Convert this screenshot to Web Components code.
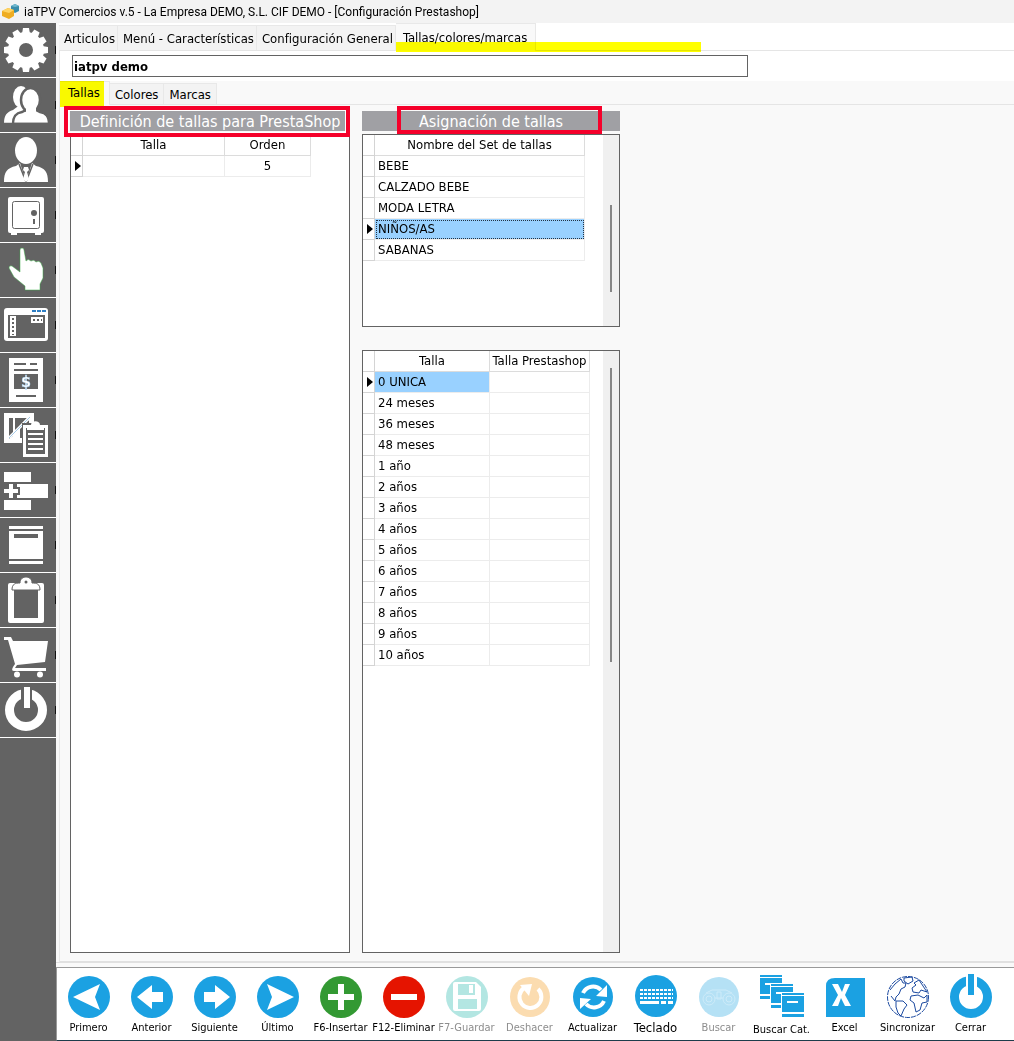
<!DOCTYPE html>
<html lang="es">
<head>
<meta charset="utf-8">
<title>iaTPV Comercios v.5</title>
<style>
html, body { margin: 0; background: #f9f9f9; }
body { font-family: "DejaVu Sans Condensed", "DejaVu Sans", sans-serif; font-size: 13px; color: #000; }
</style>
</head>
<body>
<pos-app></pos-app>
<script>
const define = (name, html, setup) => {
  const t = document.createElement('template');
  t.innerHTML = html;
  customElements.define(name, class extends HTMLElement {
    constructor() {
      super();
      this.attachShadow({ mode: 'open' }).append(t.content.cloneNode(true));
    }
    connectedCallback() { if (setup && !this.ready) { this.ready = true; setup(this, this.shadowRoot); } }
  });
};

const D = '#636363';
const tooth = a => `<path transform="rotate(${a} 26 27)" d="M22 11l1-6h6l1 6z"/>`;
const sideIcons = {
  config: `<circle cx="26" cy="27" r="12.500" stroke-width="11" stroke="#fff" fill="none"/>${Array.from({ length: 12 }, (_, i) => tooth(i * 30)).join('')}`,
  clientes: `<ellipse cx="21" cy="19" rx="8" ry="11"/><path d="M4 45c0-8 3-11 9-13l4-3h7v16z"/><g stroke="${D}" stroke-width="2.500"><path d="M13 46c0-8 3-11 9-12l4-2h10l4 2c6 1 9 4 9 12z"/><ellipse cx="30.500" cy="22" rx="9.500" ry="12"/></g><path d="M26 30h10v6H26z"/><path d="M3 44.800h46v3H3z" fill="${D}"/>`,
  usuario: `<ellipse cx="26" cy="17.500" rx="11" ry="13.500"/><path d="M4 49c0-10 3-14 12-16l4-3 6 19 6-19 4 3c9 2 12 6 12 16z"/><path d="M19 31l7 18 7-18" fill="none" stroke="${D}" stroke-width="1.500"/><path d="M24 34h4l1 3-2 2 2 7-3 3-3-3 2-7-2-2z"/>`,
  caja: `<rect x="8" y="9" width="36" height="36" rx="2"/><path d="M11 44h6v3h-6zM35 44h6v3h-6z"/><rect x="12.500" y="13.500" width="27" height="27" rx="2" fill="none" stroke="${D}"/><circle cx="34" cy="25" r="3" fill="${D}"/><path d="M33 31h2v5h-2z" fill="${D}"/>`,
  tpv: `<path stroke="#3fae49" stroke-width=".5" d="M20 7q0-2 2-2t2 2l2 11q2-3 5 0 3-2 5 1 3-2 5 1l2 5v10l-3 6v6H25v-4L14 34 9 25q0-3 3-2l8 6z"/>`,
  ventana: `<rect x="4" y="10" width="44" height="33" rx="3"/><path d="M8 17h37v23H8z" fill="${D}"/><path d="M10 18h6v20h-6zM31 19h12v6H31z"/><path d="M32 13h14" stroke="#2f7fc4" stroke-width="2" stroke-dasharray="4 1"/><path d="M13 20v17M33 22h9" stroke="${D}" stroke-width="2" stroke-dasharray="2"/>`,
  factura: `<path d="M9 5h34v44H9z"/><path d="M14 11h12M30 11h7M14 17h24M16 43h20" stroke="${D}" stroke-width="2"/><path d="M14 21h24v15H14z" fill="${D}"/><text x="26" y="34" text-anchor="middle" font-size="16" font-weight="bold" stroke="#9fd0f5" stroke-width=".4">$</text>`,
  informe: `<path d="M4 5h30v30H4z"/><path d="M9 10h4v18l-4 3zM15 10h12L15 23z" fill="${D}"/><path d="M20 30V20l9-8v18z" fill="${D}"/><path d="M9 30L30 9" stroke="#fff" stroke-width="3"/><path d="M9 30L30 9" stroke="#7fb4e0" stroke-width=".7"/><path d="M22 15h27v35H22z" fill="${D}"/><path d="M23 17h25v32H23z"/><path d="M26 20h19v26H26z" fill="${D}"/><path d="M27 22v-5h4c0-5 9-5 9 0h4v5z"/><path d="M28 26h15M28 31h15M28 36h15M28 41h15" stroke="#fff" stroke-width="2"/>`,
  anadir: `<path d="M4 9h27v10H4zM4 37h27v10H4zM17 21h31v14H17v-3h3v-8h-3z"/><path d="M4 28h14M11 21v14" stroke="#fff" stroke-width="4"/>`,
  archivo: `<path d="M9 8h34v3H9zM9 13h34v28H9zM9 43h34v3H9z"/><path d="M14 16h24v4H14z" fill="${D}"/>`,
  tareas: `<rect x="8" y="10" width="36" height="40" rx="2"/><path d="M14 16h24v29H14z" fill="${D}"/><path d="M12 17c0-6 3-7 8-7 0-8 12-8 12 0 5 0 8 1 8 7z" stroke="${D}"/><circle cx="26" cy="9" r="1.500" fill="${D}"/>`,
  compras: `<path d="M4 9h7l2 4 35 0-3 21-28 3-2 3h31v3H14c-3 0-2-3 1-7L8 12H4z"/><circle cx="17" cy="46.500" r="3"/><circle cx="40" cy="46.500" r="3"/>`,
  salir: `<circle cx="26" cy="27" r="16.500" fill="none" stroke="#fff" stroke-width="9"/><path d="M21 3h11v18H21z" fill="${D}"/><path d="M24 4h6v21h-6z"/>`
};

const B = '#1ba1e2';
const disc = (c, inner, r = 21) => `<circle cx="22" cy="23" r="${r}" fill="${c}"/>${inner}`;
const sheet = (x, y) => `<path fill="#fff" d="M${x - 1} ${y - 1}h24v26h-24z"/><path d="M${x} ${y}h22v2h-22zM${x} ${y + 3}h22v16h-22zM${x} ${y + 21}h22v3h-22z" fill="${B}"/><path d="M${x + 5} ${y + 8}h11v2h-11z" fill="#fff"/>`;
const toolIcons = {
  primero: disc(B, `<path d="M6 23l27-13-5 13 5 13z"/>`),
  anterior: disc(B, `<path d="M7 23l15-12v7h11v10H22v7z"/>`),
  siguiente: disc(B, `<path d="M37 23L22 11v7H11v10h11v7z"/>`),
  ultimo: disc(B, `<path d="M38 23L11 10l5 13-5 13z"/>`),
  insertar: disc('#339933', `<path d="M19 10h6v10h10v6H25v10h-6V26H9v-6h10z"/>`),
  eliminar: disc('#e51400', `<path d="M9 20h26v6H9z"/>`),
  guardar: disc('#b3e6e2', `<path d="M8 10q0-2 2-2h21l5 5v22q0 2-2 2H10q-2 0-2-2z"/><path d="M13 10h17v11H13zM13 25h19v10H13z" fill="#b3e6e2"/><path d="M24 11h4v8h-4z"/>`),
  deshacer: disc('#fbdcb0', `<path d="M30 15a11 11 0 1 1-14-1" fill="none" stroke="#fff" stroke-width="4"/><path d="M12 11l12-1-3 12z"/>`, 20),
  actualizar: disc(B, `<g fill="none" stroke="#fff" stroke-width="4"><path d="M12 19a11 11 0 0 1 18-3"/><path d="M33 27a11 11 0 0 1-18 3"/></g><path d="M36 11v12l-11-1zM9 35V24l11 1z"/>`, 20),
  teclado: `<circle cx="22" cy="22" r="21" fill="${B}"/><path d="M6 16h33M6 20h33M6 24h33" stroke="#fff" stroke-width="2" stroke-dasharray="3 1"/><path d="M6 27h19v3H6zM27 27h5v3h-5zM34 27h5v3h-5z"/>`,
  buscar: disc('#b5e1f5', `<g fill="none" stroke="#cdebf9"><circle cx="12" cy="25" r="6"/><circle cx="32" cy="25" r="6"/><circle cx="12" cy="25" r="3"/><circle cx="32" cy="25" r="3"/><path d="M9 19l6-3h14l6 3M18 24h8M20 18h4v7h-4z"/></g>`, 20),
  categorias: sheet(0, 1) + sheet(11, 10) + sheet(22, 19),
  excel: `<path d="M3 12q0-8 9-8h30v39H3z" fill="${B}"/><path d="M9 10h6l4 8 3-8h5l-5 11 6 11h-6l-4-8-3 8H9l6-11z"/>`,
  sincronizar: `<g fill="none" stroke="#1c4aa0"><circle cx="22" cy="23" r="20.500" stroke-dasharray="5 1"/><path d="M4 16l5-6 6-5 2 4 3 0-1 4-4 2-2 5-3 3-1 4-4-5M18 4l8-1 1 4-5 3-4-3zM28 9l5-3 4 6 4 6-6-2-2 3-6-1-1-4 4-3zM25 22l7-1 6 3 3-3 0 7-5 1-2 7-4 2-2-9-4-3zM10 27l7 0 4 4-3 4-3 7-3-3-2-6z"/></g>`,
  cerrar: `<circle cx="22" cy="23" r="16.500" fill="none" stroke="${B}" stroke-width="9"/><path d="M17 0h11v18H17z"/><path d="M19 0h6v21h-6z" fill="${B}"/>`
};

define('title-bar', `
<style>
:host { display: flex; align-items: center; gap: 5px; height: 23px; padding-left: 2px; background: #f3f3f3; font: 12px Roboto, sans-serif; white-space: nowrap; }
svg { flex: none; }
</style>
<svg width="17" height="17" viewBox="0 0 17 17"><path d="M9 3l4-2 4 2v5l-4 2-4-2z" fill="#3b8daa"/><path d="M9 3l4 1 4-1-4-2z" fill="#72b9cf"/><path d="M0 8l6-3 6 2v6l-5 3-7-3z" fill="#efad22"/><path d="M0 8l6-3 6 2-5 3z" fill="#ffd465"/></svg>
<span><slot></slot></span>`);

define('side-button', `
<style>
:host { display: block; border-bottom: 1px solid #fff; }
button { display: block; position: relative; width: 100%; height: 54px; padding: 0; border: 0; background: ${D}; font: inherit; }
button::after { content: ""; position: absolute; right: 0; top: 23px; width: 1px; height: 8px; background: #111; }
svg { display: block; fill: #fff; }
</style>
<button type="button"><svg width="56" height="54" viewBox="0 0 56 54"></svg></button>`,
(el, root) => {
  root.querySelector('svg').innerHTML = sideIcons[el.getAttribute('icon')];
  root.querySelector('button').setAttribute('aria-label', el.getAttribute('icon'));
});

define('side-nav', `
<style>:host { display: block; background: ${D}; }</style>
<nav>${Object.keys(sideIcons).map(k => `<side-button icon="${k}"></side-button>`).join('')}</nav>`);

define('tab-item', `
<style>
:host { display: block; position: relative; height: 25px; }
:host([active]) { height: 28px; margin-bottom: -1px; }
:host([sub]) { height: 21px; }
:host([sub][active]) { height: 24px; }
button { box-sizing: border-box; height: 100%; padding: 0 2px 0 5px; border: 1px solid #e8e8e8; border-width: 1px 1px 0 0; background: #f3f3f3; font: inherit; color: inherit; white-space: nowrap; }
:host([active]) button { background: #f9f9f9; padding: 0 8px 1px 7px; }
:host([sub]) button { padding: 0 5px; }
:host([sub][active]) button { padding: 0 9px 2px 8px; }
</style>
<button type="button" role="tab"><slot></slot></button><slot name="mark"></slot>`);

define('tab-strip', `
<style>
:host { display: flex; align-items: flex-end; border-bottom: 1px solid #e5e5e5; }
</style>
<slot></slot>`);

define('section-heading', `
<style>
:host { display: block; position: relative; }
h2 { margin: 0; height: 20px; line-height: 21px; background: #a0a0a4; color: #fff; font-size: 16px; font-weight: normal; text-align: center; white-space: nowrap; }
</style>
<h2><slot></slot></h2><slot name="mark"></slot>`);

define('data-grid', `
<style>
:host { display: flex; box-sizing: border-box; border: 1px solid #636363; background: #fff; }
.body { flex: 1; min-width: 0; }
table { border-collapse: separate; border-spacing: 0; table-layout: fixed; }
th, td { box-sizing: border-box; height: 21px; padding: 0 0 0 3px; border: solid #ececec; border-width: 0 1px 1px 0; font-weight: normal; text-align: left; line-height: 20px; white-space: nowrap; }
th { padding: 0; text-align: center; border-color: #dcdcdc; }
tr > :first-child { padding: 0; border-color: #d4d4d4; }
td.center { text-align: center; padding: 0; }
td.sel { background: #99d1ff; }
td.focus { outline: 1px dotted #234; outline-offset: -2px; }
.ptr { display: block; width: 0; margin-left: 4px; border: solid transparent; border-width: 5px 0 5px 6px; border-left-color: #000; }
.bar { display: none; flex: none; width: 16px; background: #f0f0f0; }
:host([scroll]) .bar { display: block; }
.thumb { width: 2px; height: var(--thumb-size); margin: var(--thumb-start) 0 0 7px; background: #868686; }
</style>
<div class="body"><table></table></div><div class="bar"><div class="thumb"></div></div>`,
(el, root) => {
  const cols = JSON.parse(el.getAttribute('columns'));
  const rows = JSON.parse(el.getAttribute('rows'));
  const cur = Number(el.getAttribute('current'));
  const mode = el.getAttribute('select') || '';
  const table = root.querySelector('table');
  table.style.width = 12 + cols.reduce((s, c) => s + c[1], 0) + 'px';
  table.innerHTML = `<colgroup><col style="width:12px">${cols.map(c => `<col style="width:${c[1]}px">`).join('')}</colgroup>
  <thead><tr><th></th>${cols.map(c => `<th scope="col">${c[0]}</th>`).join('')}</tr></thead>
  <tbody>${rows.map((r, i) => `<tr><td>${i === cur ? '<span class="ptr"></span>' : ''}</td>${cols.map((c, j) =>
    `<td class="${c[2] || ''} ${i === cur && j === 0 ? mode : ''}">${r[j] || ''}</td>`).join('')}</tr>`).join('')}</tbody>`;
});

define('tool-button', `
<style>
:host { display: block; flex: 0 1 63px; min-width: 0; }
button { display: flex; flex-direction: column; align-items: center; gap: 2px; width: 100%; padding: 0; border: 0; background: none; font: inherit; font-size: 11px; line-height: 16px; color: #000; white-space: nowrap; }
:host([large]) button { font-size: 13px; }
:host([low]) button { gap: 4px; }
button:disabled { color: #8d8d8d; }
svg { display: block; fill: #fff; flex: none; }
</style>
<button type="button"><svg width="44" height="44" viewBox="0 0 44 44"></svg><span><slot></slot></span></button>`,
(el, root) => {
  root.querySelector('svg').innerHTML = toolIcons[el.getAttribute('icon')];
  root.querySelector('button').disabled = el.hasAttribute('disabled');
});

define('tool-bar', `
<style>
:host { display: flex; box-sizing: border-box; height: 74px; padding-top: 6px; border: solid #999; border-width: 1px 0 0 1px; border-bottom: 1px solid #1d3c4b; background: #fff; }
</style>
<slot></slot>`);

define('marker-box', `
<style>
:host { display: block; position: absolute; box-sizing: border-box; border: 4px solid #f5002a; pointer-events: none; }
:host([pale]) { box-shadow: inset 0 0 0 1px #fff; }
</style>`);

define('marker-pen', `
<style>:host { display: block; position: absolute; background: #ff0; mix-blend-mode: multiply; pointer-events: none; }</style>`);

define('sizes-page', `
<style>
:host { display: flex; flex-direction: column; background: #f9f9f9; }
.shop { padding: 4px 12px; background: #fff; }
input { display: block; box-sizing: border-box; width: 676px; max-width: 100%; height: 22px; padding: 0 1px; border: 1px solid #636363; background: #fff; font: inherit; font-weight: bold; color: #000; }
.panels { flex: 1; display: flex; gap: 12px; padding: 6px 10px 8px; border-bottom: 1px solid #e0e0e0; }
.left, .right { display: flex; flex-direction: column; gap: 3px; }
.left { width: 280px; }
.right { width: 258px; }
.grow { flex: 1; }
.sets { height: 193px; margin-bottom: 20px; }
.pen { left: 0; right: 6px; top: 0; bottom: -2px; }
.boxed { inset: -5px 0 -6px -6px; }
.boxed2 { inset: -5px 18px -3px 35px; }
</style>
<div class="shop"><input aria-label="Tienda" value="iatpv demo"></div>
<tab-strip role="tablist">
  <tab-item sub active>Tallas<marker-pen slot="mark" class="pen"></marker-pen></tab-item>
  <tab-item sub>Colores</tab-item>
  <tab-item sub>Marcas</tab-item>
</tab-strip>
<div class="panels">
  <section class="left">
    <section-heading>Definición de tallas para PrestaShop<marker-box slot="mark" class="boxed" pale></marker-box></section-heading>
    <data-grid class="grow" columns='[["Talla",142],["Orden",86,"center"]]' rows='[["","5"]]' current="0"></data-grid>
  </section>
  <section class="right">
    <section-heading>Asignación de tallas<marker-box slot="mark" class="boxed2"></marker-box></section-heading>
    <data-grid class="sets" scroll style="--thumb-start:70px;--thumb-size:87px" columns='[["Nombre del Set de tallas",210]]'
      rows='[["BEBE"],["CALZADO BEBE"],["MODA LETRA"],["NIÑOS/AS"],["SABANAS"]]' current="3" select="sel focus"></data-grid>
    <data-grid class="grow" scroll style="--thumb-start:17px;--thumb-size:294px" columns='[["Talla",115],["Talla Prestashop",100]]'
      rows='[["0 UNICA"],["24 meses"],["36 meses"],["48 meses"],["1 año"],["2 años"],["3 años"],["4 años"],["5 años"],["6 años"],["7 años"],["8 años"],["9 años"],["10 años"]]' current="0" select="sel"></data-grid>
  </section>
</div>`);

define('pos-app', `
<style>
:host { display: grid; grid-template: auto minmax(0, 1fr) auto / 56px minmax(0, 1fr); min-height: 100vh; }
title-bar { grid-column: 1 / -1; }
side-nav { grid-row: 2 / 4; }
main { display: flex; flex-direction: column; margin-bottom: 4px; padding-left: 3px; border-bottom: 1px solid #e0e0e0; background: #f9f9f9; }
main > tab-strip { box-sizing: border-box; height: 28px; background: #fff; }
sizes-page { flex: 1; border-left: 1px solid #e8e8e8; }
.pen { left: 0; width: 305px; bottom: -1px; height: 10px; }
</style>
<title-bar>iaTPV Comercios v.5 - La Empresa DEMO, S.L. CIF DEMO - [Configuración Prestashop]</title-bar>
<side-nav></side-nav>
<main>
  <tab-strip role="tablist">
    <tab-item>Articulos</tab-item>
    <tab-item>Menú - Características</tab-item>
    <tab-item>Configuración General</tab-item>
    <tab-item active>Tallas/colores/marcas<marker-pen slot="mark" class="pen"></marker-pen></tab-item>
  </tab-strip>
  <sizes-page></sizes-page>
</main>
<tool-bar role="toolbar">
  <tool-button icon="primero">Primero</tool-button>
  <tool-button icon="anterior">Anterior</tool-button>
  <tool-button icon="siguiente">Siguiente</tool-button>
  <tool-button icon="ultimo">Último</tool-button>
  <tool-button icon="insertar">F6-Insertar</tool-button>
  <tool-button icon="eliminar">F12-Eliminar</tool-button>
  <tool-button icon="guardar" disabled>F7-Guardar</tool-button>
  <tool-button icon="deshacer" disabled>Deshacer</tool-button>
  <tool-button icon="actualizar">Actualizar</tool-button>
  <tool-button icon="teclado" large>Teclado</tool-button>
  <tool-button icon="buscar" disabled>Buscar</tool-button>
  <tool-button icon="categorias" low>Buscar Cat.</tool-button>
  <tool-button icon="excel">Excel</tool-button>
  <tool-button icon="sincronizar">Sincronizar</tool-button>
  <tool-button icon="cerrar">Cerrar</tool-button>
</tool-bar>`);
</script>
</body>
</html>
